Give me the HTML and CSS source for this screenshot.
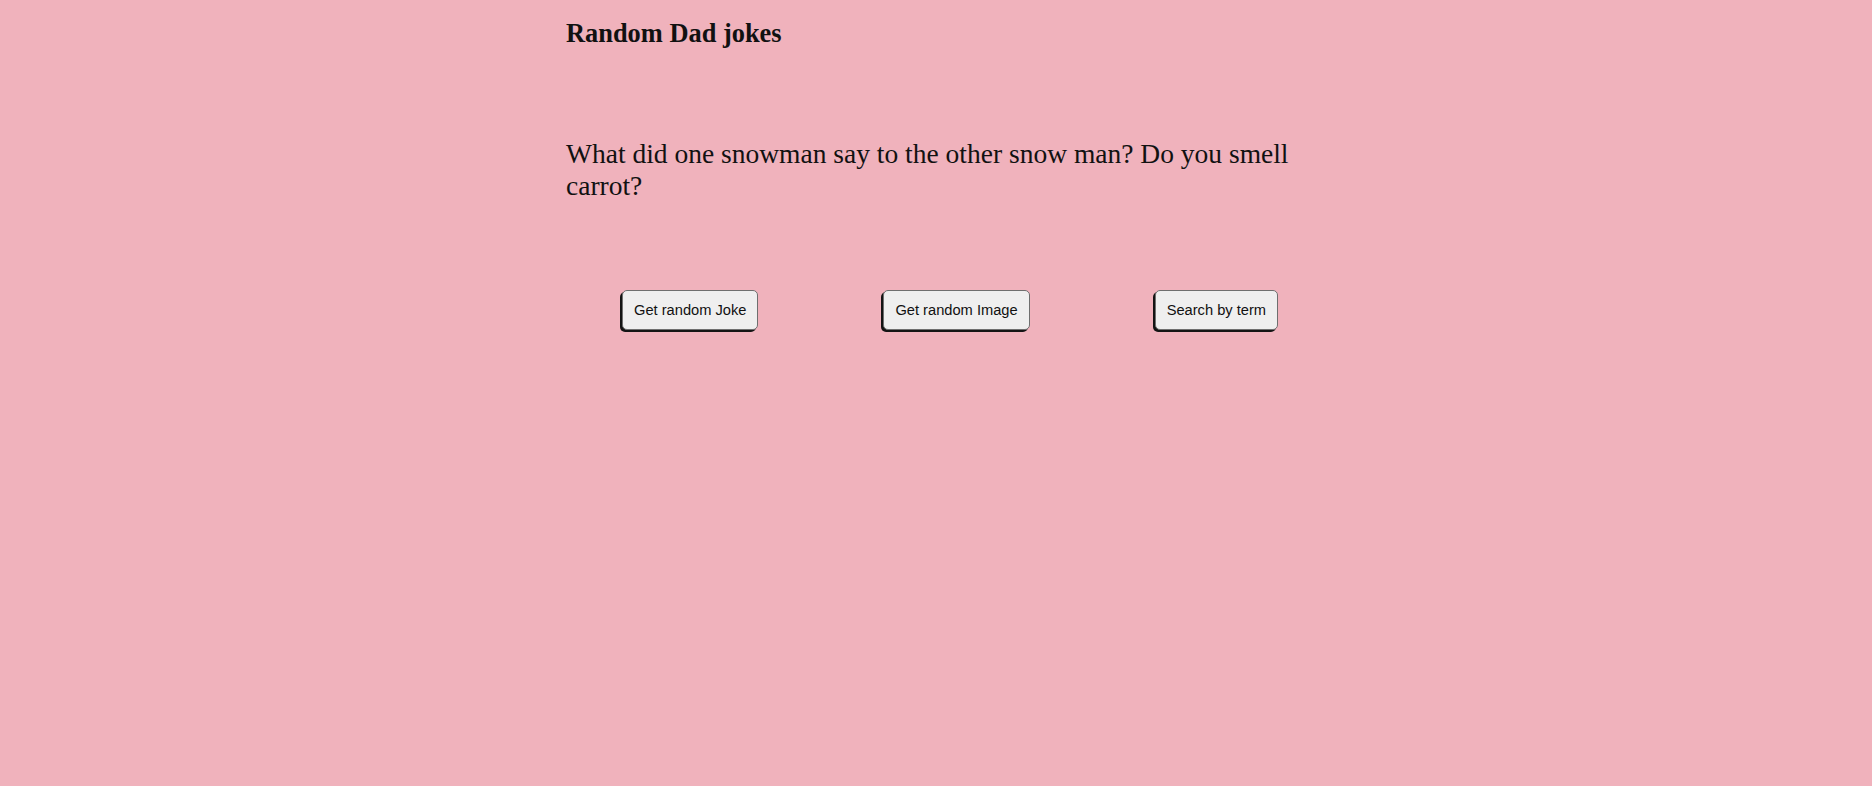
FILE: index.html
```html
<!DOCTYPE html>
<html lang="en">
<head>
<meta charset="utf-8">
<title>Random Dad jokes</title>
<link rel="stylesheet" href="styles.css">
</head>
<body>
<main class="page">
  <h1 class="title">Random Dad jokes</h1>
  <p class="joke">What did one snowman say to the other snow man? Do you smell carrot?</p>
  <div class="actions">
    <button class="btn" type="button">Get random Joke</button>
    <button class="btn" type="button">Get random Image</button>
    <button class="btn" type="button">Search by term</button>
  </div>
</main>
</body>
</html>
```

FILE: styles.css
```css
html, body {
  margin: 0;
  padding: 0;
}
body {
  background: #f0b2bc;
  color: #111;
  font-family: "Liberation Serif", "Times New Roman", serif;
  min-height: 786px;
}
.page {
  width: 740px;
  margin: 0 auto;
  display: flex;
  flex-direction: column;
}
.title {
  font-size: 26.4px;
  font-weight: 700;
  line-height: normal;
  margin: 18px 0 0;
}
.joke {
  font-size: 27.5px;
  line-height: normal;
  margin: 89px 0 0;
}
.actions {
  display: flex;
  gap: 125px;
  padding-left: 56px;
  margin-top: 88px;
}
.btn {
  font-family: "Liberation Sans", Arial, sans-serif;
  font-size: 14.67px;
  color: #111;
  background: #efefef;
  border: 1px solid #6f6f6f;
  border-radius: 5px;
  box-shadow: -2px 2px 0 #141414;
  padding: 11px 11px;
  line-height: normal;
}
```
